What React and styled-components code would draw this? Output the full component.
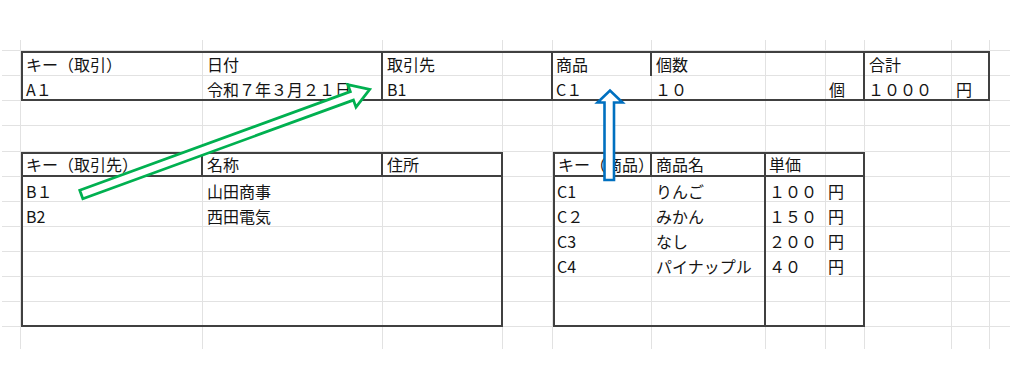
import React from 'react';
import styled, { createGlobalStyle } from 'styled-components';

const GlobalStyle = createGlobalStyle`
  html, body { margin: 0; padding: 0; background: #ffffff; }
  body { font-family: "Noto Sans CJK JP", "Noto Sans", sans-serif; }
`;

const COLS = [19, 182, 180, 120, 50, 99, 114, 60, 39, 87, 38, 20];
const ROWS = [11, 25, 25, 25, 26, 25, 25, 25, 25, 25, 25, 25, 22];
const GRID = '#e2e2e2';
const DARK = '#404040';

const Page = styled.div`
  position: relative;
  width: 1024px;
  height: 375px;
  overflow: hidden;
  box-sizing: border-box;
  padding: 40px 0 0 2px;
  background: #ffffff;
`;

const Sheet = styled.div`
  display: grid;
  grid-template-columns: ${COLS.map((c) => `${c}px`).join(' ')};
  grid-template-rows: ${ROWS.map((r) => `${r}px`).join(' ')};
  width: max-content;
`;

const GridCell = styled.div`
  grid-column: ${(p) => p.$col};
  grid-row: ${(p) => p.$row};
  box-sizing: border-box;
  border-right: ${(p) => (p.$lastCol ? '0' : `1px solid ${GRID}`)};
  border-bottom: ${(p) => (p.$lastRow ? '0' : `1px solid ${GRID}`)};
`;

const Table = styled.div`
  grid-column: ${(p) => p.$cols};
  grid-row: ${(p) => p.$rows};
  display: grid;
  grid-template-columns: ${(p) => p.$colTemplate};
  grid-template-rows: ${(p) => p.$rowTemplate};
  border: 2px solid ${DARK};
  box-sizing: border-box;
`;

const Cell = styled.div`
  grid-column: span ${(p) => p.$span || 1};
  box-sizing: border-box;
  display: flex;
  align-items: flex-end;
  padding: 0 0 ${(p) => (p.$pb ?? 1)}px ${(p) => (p.$pad ?? 3)}px;
  border-right: ${(p) => (p.$dr ? `2px solid ${DARK}` : 'none')};
  border-bottom: ${(p) => (p.$db ? `2px solid ${DARK}` : 'none')};
  font-size: 16px;
  line-height: 20px;
  color: #141414;
  white-space: nowrap;
  min-width: 0;
`;

const Overlay = styled.svg`
  position: absolute;
  left: 0;
  top: 0;
  pointer-events: none;
`;

const topHeader = [
  { t: 'キー（取引）' },
  { t: '日付', dr: true, pad: 4 },
  { t: '取引先', pad: 4 },
  { t: '', dr: true },
  { t: '商品', dr: true },
  { t: '個数', pad: 4 },
  { t: '' },
  { t: '', dr: true },
  { t: '合計', pad: 4 },
  { t: '' },
];
const topRow = [
  { t: 'A１' },
  { t: '令和７年３月２１日', dr: true, pad: 4 },
  { t: 'B1', pad: 4 },
  { t: '', dr: true },
  { t: 'C１' },
  { t: '１０' },
  { t: '' },
  { t: '個', dr: true },
  { t: '１０００' },
  { t: '円', pad: 4 },
];

const partnerRows = [
  ['B１', '山田商事', ''],
  ['B2', '西田電気', ''],
  ['', '', ''],
  ['', '', ''],
  ['', '', ''],
  ['', '', ''],
];

const productRows = [
  ['C1', 'りんご', '１００', '円'],
  ['C２', 'みかん', '１５０', '円'],
  ['C3', 'なし', '２００', '円'],
  ['C4', 'パイナップル', '４０', '円'],
  ['', '', '', ''],
  ['', '', '', ''],
];

function Background() {
  const cells = [];
  ROWS.forEach((_, r) => {
    COLS.forEach((__, c) => {
      cells.push(
        <GridCell
          key={`${r}-${c}`}
          $col={c + 1}
          $row={r + 1}
          $lastCol={c === COLS.length - 1}
          $lastRow={r === ROWS.length - 1}
        />
      );
    });
  });
  return cells;
}

function Arrows() {
  const L = 307;
  const hl = 19;
  const h = 4.5;
  const hw = 12;
  const green = `0,${-h} ${L - hl},${-h} ${L - hl},${-hw} ${L},0 ${L - hl},${hw} ${L - hl},${h} 0,${h}`;
  const blue = '604.5,180 604.5,102.5 597.5,102.5 610,90.5 622.5,102.5 614,102.5 614,180';
  return (
    <Overlay width="1024" height="375" viewBox="0 0 1024 375">
      <polygon
        points={green}
        transform="translate(81.3 194.5) rotate(-20.03)"
        fill="#ffffff"
        stroke="#00b050"
        strokeWidth="2.75"
        strokeLinejoin="miter"
      />
      <polygon points={blue} fill="#ffffff" stroke="#0070c0" strokeWidth="2.6" strokeLinejoin="miter" />
    </Overlay>
  );
}

export default function App() {
  return (
    <>
      <GlobalStyle />
      <Page>
        <Sheet>
          <Background />

          <Table
            $cols="2 / 12"
            $rows="2 / 4"
            $colTemplate="180px 180px 120px 50px 99px 114px 60px 39px 87px 36px"
            $rowTemplate="23px 23px"
          >
            {topHeader.map((c, i) => (
              <Cell key={`h${i}`} $dr={c.dr} $pad={c.pad} $pb={2}>{c.t}</Cell>
            ))}
            {topRow.map((c, i) => (
              <Cell key={`r${i}`} $dr={c.dr} $pad={c.pad} $pb={0}>{c.t}</Cell>
            ))}
          </Table>

          <Table
            $cols="2 / 5"
            $rows="6 / 13"
            $colTemplate="180px 180px 118px"
            $rowTemplate="23px 25px 25px 25px 25px 25px 23px"
          >
            <Cell $dr $db>キー（取引先）</Cell>
            <Cell $dr $db $pad={4}>名称</Cell>
            <Cell $db $pad={4}>住所</Cell>
            {partnerRows.map((row, r) =>
              row.map((t, c) => (
                <Cell key={`p${r}-${c}`} $pad={c === 0 ? 3 : 4}>{t}</Cell>
              ))
            )}
          </Table>

          <Table
            $cols="6 / 10"
            $rows="6 / 13"
            $colTemplate="97px 114px 60px 37px"
            $rowTemplate="23px 25px 25px 25px 25px 25px 23px"
          >
            <Cell $dr $db>キー（商品）</Cell>
            <Cell $dr $db $pad={4}>商品名</Cell>
            <Cell $db $span={2}>単価</Cell>
            {productRows.map((row, r) =>
              row.map((t, c) => (
                <Cell key={`g${r}-${c}`} $dr={c === 1} $pad={c === 0 ? 2 : c === 1 ? 4 : c === 3 ? 2 : 3}>
                  {t}
                </Cell>
              ))
            )}
          </Table>
        </Sheet>
        <Arrows />
      </Page>
    </>
  );
}
